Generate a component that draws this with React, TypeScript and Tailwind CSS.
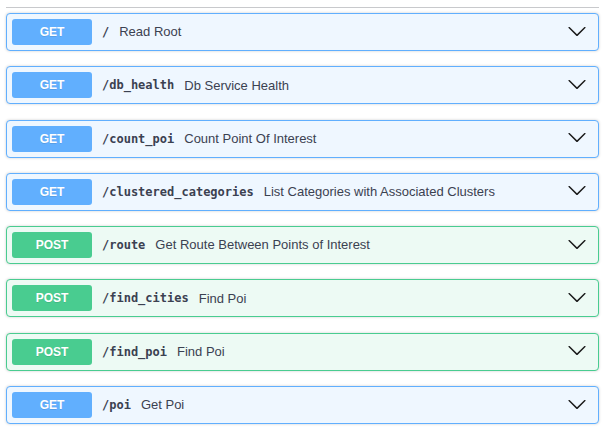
type Op = { method: "GET" | "POST"; path: string; summary: string };

const OPS: Op[] = [
  { method: "GET", path: "/", summary: "Read Root" },
  { method: "GET", path: "/db_health", summary: "Db Service Health" },
  { method: "GET", path: "/count_poi", summary: "Count Point Of Interest" },
  { method: "GET", path: "/clustered_categories", summary: "List Categories with Associated Clusters" },
  { method: "POST", path: "/route", summary: "Get Route Between Points of Interest" },
  { method: "POST", path: "/find_cities", summary: "Find Poi" },
  { method: "POST", path: "/find_poi", summary: "Find Poi" },
  { method: "GET", path: "/poi", summary: "Get Poi" },
];

const STYLES = {
  GET: { card: "border-[#61affe] bg-[#eff7ff]", badge: "bg-[#61affe]" },
  POST: { card: "border-[#49cc90] bg-[#edfaf4]", badge: "bg-[#49cc90]" },
};

function Arrow() {
  return (
    <svg width="20" height="20" viewBox="0 0 20 20" className="mr-[6px] -mt-[3px] shrink-0 fill-[#1a1a1a]">
      <path d="M17.418 6.109c.272-.268.709-.268.979 0s.271.701 0 .969l-7.908 7.83c-.27.268-.707.268-.979 0l-7.908-7.83c-.27-.268-.27-.701 0-.969.271-.268.709-.268.979 0L10 13.25l7.418-7.141z" />
    </svg>
  );
}

function OpBlock({ op }: { op: Op }) {
  const s = STYLES[op.method];
  return (
    <div
      className={`flex items-center rounded-[4px] border p-[5px] shadow-[0_0_3px_rgba(0,0,0,0.19)] ${s.card}`}
    >
      <span
        className={`flex h-[26px] w-[80px] shrink-0 items-center justify-center rounded-[3px] text-[12px] font-bold text-white [text-shadow:0_1px_0_rgba(0,0,0,0.1)] ${s.badge}`}
      >
        {op.method}
      </span>
      <span className="px-[10px] font-['DejaVu_Sans_Mono',monospace] text-[12px] font-bold text-[#3b4151]">
        {op.path}
      </span>
      <span className="flex-1 text-[13px] text-[#3b4151]">{op.summary}</span>
      <Arrow />
    </div>
  );
}

export default function App() {
  return (
    <div className="min-h-screen bg-white px-[6px] pt-[7px] font-['Liberation_Sans',Arial,sans-serif] w-[605px]">
      <div className="border-t border-[#c8c9cc]" />
      <div className="mt-[5px] flex flex-col gap-[15.3px]">
        {OPS.map((op) => (
          <OpBlock key={op.path} op={op} />
        ))}
      </div>
    </div>
  );
}
